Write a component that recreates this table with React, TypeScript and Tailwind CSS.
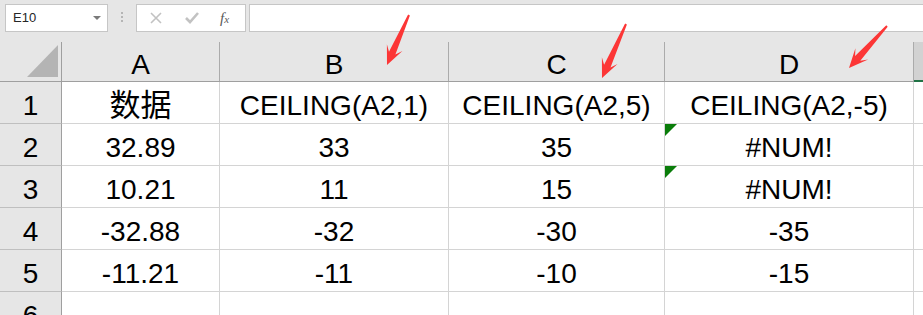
import React from 'react';

const font = "font-['Liberation_Sans','Noto_Sans_CJK_SC',sans-serif]";

const columns = [
  { key: 'A', width: 'w-[158px]' },
  { key: 'B', width: 'w-[229px]' },
  { key: 'C', width: 'w-[216px]' },
  { key: 'D', width: 'w-[249px]' },
];

type Cell = { value: string; flagged?: boolean; cjk?: boolean };

const rows: Cell[][] = [
  [{ value: '数据', cjk: true }, { value: 'CEILING(A2,1)' }, { value: 'CEILING(A2,5)' }, { value: 'CEILING(A2,-5)' }],
  [{ value: '32.89' }, { value: '33' }, { value: '35' }, { value: '#NUM!', flagged: true }],
  [{ value: '10.21' }, { value: '11' }, { value: '15' }, { value: '#NUM!', flagged: true }],
  [{ value: '-32.88' }, { value: '-32' }, { value: '-30' }, { value: '-35' }],
  [{ value: '-11.21' }, { value: '-11' }, { value: '-10' }, { value: '-15' }],
  [{ value: '' }, { value: '' }, { value: '' }, { value: '' }],
];

// callout arrows: tail -> tip
const arrows = [
  { x1: 409, y1: 15, x2: 387, y2: 65 },
  { x1: 626, y1: 24, x2: 602, y2: 78 },
  { x1: 887, y1: 26, x2: 849, y2: 68 },
];

const arrowPoints = (x1: number, y1: number, x2: number, y2: number) => {
  const len = Math.hypot(x2 - x1, y2 - y1);
  const ux = (x2 - x1) / len;
  const uy = (y2 - y1) / len;
  const nx = -uy;
  const ny = ux;
  const at = (d: number, w: number) =>
    `${(x1 + ux * d + nx * w).toFixed(1)},${(y1 + uy * d + ny * w).toFixed(1)}`;
  const neck = len - 13;
  const barb = len - 19;
  return [at(0, 1), at(neck, 3.5), at(barb, 8.5), at(len, 0), at(barb, -8.5), at(neck, -3.5), at(0, -1)].join(' ');
};

const FormulaBar: React.FC = () => (
  <div className="flex h-[42px] items-start pt-[4px]">
    <div className="ml-[5px] flex h-[28px] w-[103px] items-center justify-between border border-[#c6c6c6] bg-white pl-[7px] pr-[6px]">
      <span className="font-['Liberation_Sans',sans-serif] text-[13px] text-[#262626]">E10</span>
      <svg width="8" height="5" viewBox="0 0 8 5">
        <path d="M0 0 H8 L4 4 Z" fill="#7a7a7a" />
      </svg>
    </div>
    <div className="ml-[13px] mt-[8px] flex flex-col gap-[2px]">
      <span className="h-[2px] w-[2px] bg-[#b5b5b5]" />
      <span className="h-[2px] w-[2px] bg-[#b5b5b5]" />
      <span className="h-[2px] w-[2px] bg-[#b5b5b5]" />
    </div>
    <div className="ml-[13px] flex h-[28px] w-[110px] items-center border border-[#c6c6c6] bg-white">
      <svg width="12" height="12" viewBox="0 0 12 12" className="ml-[13px]">
        <path d="M1 1 L11 11 M11 1 L1 11" stroke="#c2c2c2" strokeWidth="1.6" />
      </svg>
      <svg width="14" height="12" viewBox="0 0 14 12" className="ml-[23px]">
        <path d="M1 6 L5 10 L13 1" stroke="#c2c2c2" strokeWidth="2.6" fill="none" />
      </svg>
      <span className="ml-[21px] font-['Liberation_Serif',serif] text-[15px] italic text-[#595959]">
        f<span className="text-[11px]">x</span>
      </span>
    </div>
    <div className="ml-[3px] h-[28px] flex-1 border border-r-0 border-[#c6c6c6] bg-white" />
  </div>
);

const App: React.FC = () => {
  return (
    <div className={`relative h-[315px] w-[923px] overflow-hidden bg-[#e6e6e6] text-black ${font}`}>
      <FormulaBar />

      {/* column headers */}
      <div className="flex h-[40px] border-b border-[#9f9f9f]">
        <div className="relative w-[62px] shrink-0 border-r border-[#9f9f9f]">
          <svg width="32" height="33" viewBox="0 0 32 33" className="absolute left-[27px] top-[3px]">
            <path d="M0 32 L31 32 L31 0 Z" fill="#b4b4b4" />
          </svg>
        </div>
        {columns.map((col) => (
          <div
            key={col.key}
            className={`${col.width} flex shrink-0 items-end justify-center border-r border-[#ababab] text-[28px] leading-[32px]`}
          >
            {col.key}
          </div>
        ))}
        <div className="-mb-px flex-1 border-b-2 border-[#217346] bg-[#d2d2d2]" />
      </div>

      {/* sheet body */}
      {rows.map((row, r) => (
        <div key={r} className="flex h-[42px]">
          <div className="flex w-[62px] shrink-0 items-end justify-center border-r border-b border-r-[#9f9f9f] border-b-[#bfbfbf] pb-px text-[28px] leading-[32px]">
            {r + 1}
          </div>
          {row.map((cell, c) => (
            <div
              key={c}
              className={`${columns[c].width} relative flex shrink-0 items-end justify-center border-r border-b border-[#d4d4d4] bg-white pb-px leading-[32px] ${
                cell.cjk ? 'text-[31px]' : 'text-[28px]'
              }`}
            >
              {cell.flagged && (
                <span className="absolute left-0 top-0 h-0 w-0 border-t-[12px] border-r-[12px] border-t-[#0a7d0a] border-r-transparent" />
              )}
              {cell.value}
            </div>
          ))}
          <div className="flex-1 border-b border-[#d4d4d4] bg-white" />
        </div>
      ))}

      <svg className="pointer-events-none absolute left-0 top-0" width="923" height="315" viewBox="0 0 923 315">
        {arrows.map((a, i) => (
          <polygon key={i} points={arrowPoints(a.x1, a.y1, a.x2, a.y2)} fill="#fc3636" />
        ))}
      </svg>
    </div>
  );
};

export default App;
